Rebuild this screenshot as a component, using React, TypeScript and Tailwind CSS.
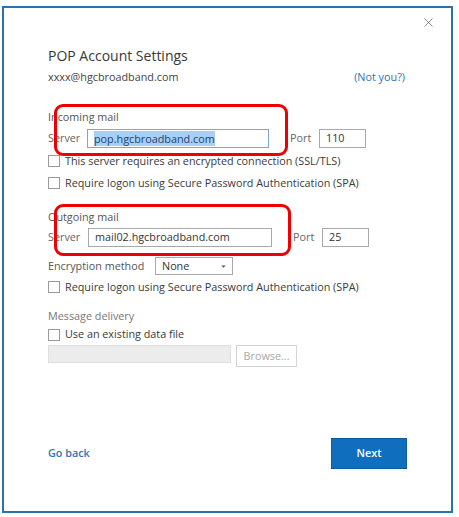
import { X, ChevronDown } from "lucide-react"

function Check({ label, tight }: { label: string; tight?: boolean }) {
  return (
    <div className={`flex items-center gap-[5px] ${tight ? "h-[21px]" : "h-[22px]"}`}>
      <span className="w-[12px] h-[12px] border border-[#9a9a9a] bg-white shrink-0" />
      <span className="text-[#3a3a3a]">{label}</span>
    </div>
  )
}

function Field({ value, className, focused }: { value: string; className: string; focused?: boolean }) {
  return (
    <div
      className={`h-[19px] border bg-white flex items-center px-[6px] ${
        focused ? "border-[#7aa7d6]" : "border-[#a9a9a9]"
      } ${className}`}
    >
      {focused ? (
        <span className="bg-[#a8d0f2] text-[#1c3f78] leading-[15px]">{value}</span>
      ) : (
        <span className="text-[#333]">{value}</span>
      )}
    </div>
  )
}

export default function App() {
  return (
    <div className="w-[459px] h-[517px] bg-white pt-[6px] pl-[2px] font-['Open_Sans',sans-serif] text-[10.8px]">
      <div className="relative w-[451px] h-[507px] border-2 border-[#2a73b3] bg-white">
        <button className="absolute right-[15px] top-[7px] text-[#555]">
          <X size={15} strokeWidth={1.1} />
        </button>

        <div className="pl-[44px] pr-[46px] pt-[38px]">
          <h1 className="text-[14px] text-[#383838] leading-[20px]">POP Account Settings</h1>
          <div className="flex justify-between mt-[3px] leading-[16px]">
            <span className="text-[#444]">xxxx@hgcbroadband.com</span>
            <span className="text-[#2f73b4]">(Not you?)</span>
          </div>

          <section className="relative mt-[24px]">
            <div className="text-[#555] leading-[16px]">Incoming mail</div>
            <div className="flex items-center mt-[4px]">
              <span className="text-[#666] w-[39px]">Server</span>
              <Field value="pop.hgcbroadband.com" className="w-[182px]" focused />
              <span className="text-[#666] ml-[21px] w-[29px]">Port</span>
              <Field value="110" className="w-[47px]" />
            </div>
            <div className="mt-[2px]">
              <Check label="This server requires an encrypted connection (SSL/TLS)" />
              <Check label="Require logon using Secure Password Authentication (SPA)" />
            </div>
            <div className="absolute left-[6px] top-[-5px] w-[234px] h-[52px] border-[3px] border-[#ee0000] rounded-[9px]" />
          </section>

          <section className="relative mt-[15px]">
            <div className="text-[#555] leading-[16px]">Outgoing mail</div>
            <div className="flex items-center mt-[3px]">
              <span className="text-[#666] w-[40px]">Server</span>
              <Field value="mail02.hgcbroadband.com" className="w-[184px]" />
              <span className="text-[#666] ml-[21px] w-[29px]">Port</span>
              <Field value="25" className="w-[47px]" />
            </div>
            <div className="flex items-center mt-[10px]">
              <span className="text-[#555] w-[107px]">Encryption method</span>
              <div className="w-[78px] h-[18px] border border-[#a9a9a9] flex items-center justify-between pl-[6px] pr-[4px] text-[#333]">
                None
                <ChevronDown size={9} strokeWidth={0} className="fill-[#555]" />
              </div>
            </div>
            <div className="mt-[1px]">
              <Check label="Require logon using Secure Password Authentication (SPA)" />
            </div>
            <div className="absolute left-[6px] top-[-5px] w-[237px] h-[52px] border-[3px] border-[#ee0000] rounded-[9px]" />
          </section>

          <section className="mt-[10px]">
            <div className="text-[#777] leading-[16px]">Message delivery</div>
            <Check label="Use an existing data file" tight />
            <div className="flex items-start gap-[5px]">
              <div className="w-[183px] h-[18px] bg-[#ececec] border border-[#dedede]" />
              <div className="w-[61px] h-[22px] border border-[#d4d4d4] flex items-center justify-center text-[#a8a8a8]">
                Browse...
              </div>
            </div>
          </section>
        </div>

        <div className="absolute left-[44px] right-[44px] top-[430px] flex items-center justify-between">
          <span className="text-[#2f73b4] font-semibold">Go back</span>
          <button className="w-[76px] h-[31px] bg-[#106ebe] border border-[#0d5a9c] text-white font-semibold">
            Next
          </button>
        </div>
      </div>
    </div>
  )
}
